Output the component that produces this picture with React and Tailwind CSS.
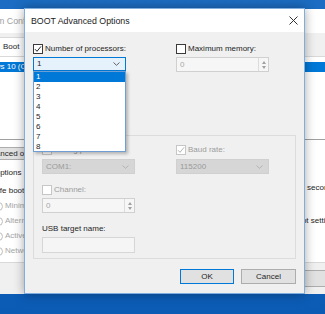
import React from 'react';

// Win10 dialog palette
const C = {
  text: 'text-[#1e1e1e]',
  dim: 'text-[#9c9c9c]',
};

function Check({ checked, disabled }) {
  return (
    <span
      className={`w-[10px] h-[10px] border bg-white flex items-center justify-center shrink-0 ${
        disabled ? 'border-[#c6c6c6]' : 'border-[#3a3a3a]'
      }`}
    >
      {checked && (
        <svg width="8" height="8" viewBox="0 0 8 8">
          <path d="M1 4.2 L3 6.3 L7 1.4" fill="none" stroke={disabled ? '#b5b5b5' : '#222'} strokeWidth="1" />
        </svg>
      )}
    </span>
  );
}

function Chevron({ color }) {
  return (
    <svg width="7" height="4" viewBox="0 0 7 4">
      <path d="M0.5 0.5 L3.5 3.3 L6.5 0.5" fill="none" stroke={color} strokeWidth="0.9" />
    </svg>
  );
}

function Spin({ value }) {
  return (
    <div className="h-[15px] w-[93px] border border-[#d0d0d0] bg-[#f6f6f6] flex items-stretch">
      <span className="flex-1 pl-[3px] leading-[13px] text-[#a8a8a8]">{value}</span>
      <div className="w-[10px] border-l border-[#dcdcdc] flex flex-col items-center justify-center gap-[2px] text-[#9a9a9a]">
        <svg width="4" height="3" viewBox="0 0 4 3"><path d="M0 3 L2 0 L4 3Z" fill="#a0a0a0" /></svg>
        <svg width="4" height="3" viewBox="0 0 4 3"><path d="M0 0 L2 3 L4 0Z" fill="#a0a0a0" /></svg>
      </div>
    </div>
  );
}

function Radio({ label }) {
  return (
    <div className="mt-[5px] h-[10px] -ml-[6px] flex items-center gap-[2px] whitespace-nowrap">
      <span className="w-[9px] h-[9px] rounded-full border border-[#bdbdbd] bg-white shrink-0" />
      <span className="text-[#a6a6a6]">{label}</span>
    </div>
  );
}

export default function App() {
  return (
    <div className="relative w-[325px] h-[314px] overflow-hidden bg-gradient-to-b from-[#1b6cc2] to-[#0b5bb4] font-['Liberation_Sans',Arial,sans-serif] text-[8px] leading-[10px]">
      {/* System Configuration (behind) */}
      <div className="absolute left-0 top-[9px] w-[345px] h-[285px] bg-[#f0f0f0] flex flex-col overflow-hidden">
        <div className="h-[24px] bg-white flex items-center shrink-0">
          <span className="-ml-[25px] text-[8.8px] text-[#a0a0a0] whitespace-nowrap">System Configuration</span>
        </div>

        <div className="h-[23px] shrink-0 flex items-end">
          <div className="-ml-[14px] w-[40px] h-[19px] bg-white border-x border-t border-[#d9d9d9] flex items-center pl-[16px] text-[#1e1e1e]">
            Boot
          </div>
        </div>

        <div className="h-[207px] shrink-0 bg-white border-y border-[#d9d9d9] flex flex-col">
          <div className="mt-[5px] h-[78px] border-b border-[#a0a0a0] shrink-0">
            <div className="h-[10px] bg-[#0078d7] text-white whitespace-nowrap -ml-[28px] pl-0">
              Windows 10 (C:\WINDOWS) : Current OS; Default OS
            </div>
          </div>

          <div className="flex flex-1">
            <div className="w-[24px] shrink-0 flex flex-col text-[#1e1e1e]">
              <div className="mt-[7px] h-[13px] w-[120px] -ml-[40px] border border-[#adadad] bg-[#e1e1e1] flex items-center pl-[21px] whitespace-nowrap">
                Advanced options...
              </div>
              <div className="mt-[8px] h-[10px] -ml-[23px] whitespace-nowrap">Boot options</div>
              <div className="mt-[8px] h-[10px] -ml-[23px] flex items-center gap-[3px] whitespace-nowrap">
                <Check />
                <span>Safe boot</span>
              </div>
              <Radio label="Minimal" />
              <Radio label="Alternate shell" />
              <Radio label="Active Directory repair" />
              <Radio label="Network" />
            </div>
            <div className="w-[282px] shrink-0" />
            <div className="flex flex-col text-[#1e1e1e] whitespace-nowrap">
              <div className="mt-[43px] h-[10px] ml-[1px]">seconds</div>
              <div className="mt-[23px] h-[10px] -ml-[13px]">boot settings permanent</div>
            </div>
          </div>
        </div>

        <div className="flex-1 flex">
          <div className="w-[252px] shrink-0" />
          <div className="mt-[7px] h-[17px] w-[60px] border border-[#adadad] bg-[#e1e1e1]" />
          <div className="mt-[7px] ml-[4px] h-[17px] w-[60px] border border-[#adadad] bg-[#e1e1e1]" />
        </div>
      </div>

      {/* BOOT Advanced Options dialog */}
      <div className="absolute left-[24px] top-[8px] w-[281px] h-[286px] border border-[#7eaee0] bg-[#f0f0f0] flex flex-col shadow-[0_0_10px_rgba(0,0,0,0.35)]">
        <div className="h-[23px] bg-white flex items-center justify-between pl-[6px] pr-[6px] shrink-0">
          <span className="text-[8.8px] text-[#222]">BOOT Advanced Options</span>
          <svg width="9" height="9" viewBox="0 0 9 9">
            <path d="M0.5 0.5 L8.5 8.5 M8.5 0.5 L0.5 8.5" stroke="#333" strokeWidth="1" />
          </svg>
        </div>

        <div className="relative flex-1 flex flex-col px-[8px]">
          <div className="mt-[12px] grid grid-cols-[93px_93px] gap-x-[50px]">
            <div className="flex flex-col">
              <div className="h-[10px] flex items-center gap-[2px] text-[#1e1e1e] whitespace-nowrap">
                <Check checked />
                <span>Number of processors:</span>
              </div>
              <div className="mt-[3px] h-[14px] border border-[#0078d7] bg-[#e5f1fb] flex items-center justify-between pl-[3px] pr-[5px] text-[#1e1e1e]">
                <span>1</span>
                <Chevron color="#555" />
              </div>
            </div>
            <div className="flex flex-col">
              <div className="h-[10px] flex items-center gap-[2px] text-[#1e1e1e] whitespace-nowrap">
                <Check />
                <span>Maximum memory:</span>
              </div>
              <div className="mt-[3px]">
                <Spin value="0" />
              </div>
            </div>
          </div>

          <div className="relative mt-[63px] w-[263px] h-[124px] border border-[#dcdcdc] px-[8px] pt-[9px] flex flex-col">
            <span className="absolute -top-[6px] left-[6px] px-[2px] bg-[#f0f0f0] text-[#1e1e1e] whitespace-nowrap">
              Global debug settings
            </span>
            <div className="grid grid-cols-[93px_93px] gap-x-[41px]">
              <div className="flex flex-col">
                <div className="h-[10px] flex items-center gap-[2px] text-[#9c9c9c] whitespace-nowrap">
                  <Check disabled />
                  <span>Debug port:</span>
                </div>
                <div className="mt-[4px] h-[15px] bg-[#d6d6d6] border border-[#d0d0d0] flex items-center justify-between pl-[3px] pr-[5px] text-[#9a9a9a]">
                  <span>COM1:</span>
                  <Chevron color="#b0b0b0" />
                </div>
              </div>
              <div className="flex flex-col">
                <div className="h-[10px] flex items-center gap-[2px] text-[#9c9c9c] whitespace-nowrap">
                  <Check checked disabled />
                  <span>Baud rate:</span>
                </div>
                <div className="mt-[4px] h-[15px] bg-[#d6d6d6] border border-[#d0d0d0] flex items-center justify-between pl-[3px] pr-[5px] text-[#9a9a9a]">
                  <span>115200</span>
                  <Chevron color="#b0b0b0" />
                </div>
              </div>
            </div>

            <div className="mt-[11px] h-[10px] flex items-center gap-[2px] text-[#9c9c9c]">
              <Check disabled />
              <span>Channel:</span>
            </div>
            <div className="mt-[3px]">
              <Spin value="0" />
            </div>

            <div className="mt-[11px] h-[10px] text-[#1e1e1e]">USB target name:</div>
            <div className="mt-[3px] h-[16px] w-[93px] border border-[#d6d6d6] bg-[#f5f5f5]" />
          </div>

          <div className="mt-[10px] flex justify-end gap-[7px]">
            <button className="h-[15px] w-[54px] border border-[#0078d7] bg-[#e1e1e1] text-[#1e1e1e] leading-[13px]">OK</button>
            <button className="h-[15px] w-[55px] border border-[#adadad] bg-[#e1e1e1] text-[#1e1e1e] leading-[13px]">Cancel</button>
          </div>

          {/* open processor dropdown */}
          <div className="absolute left-[8px] top-[39px] w-[93px] h-[81px] border border-[#6f9fd2] bg-white flex flex-col shadow-[2px_2px_3px_rgba(0,0,0,0.25)] text-[#1e1e1e]">
            {['1', '2', '3', '4', '5', '6', '7', '8'].map((n, i) => (
              <div key={n} className={`h-[10px] pl-[2px] leading-[10px] ${i === 0 ? 'bg-[#0078d7] text-white' : ''}`}>
                {n}
              </div>
            ))}
          </div>
        </div>
      </div>
    </div>
  );
}
